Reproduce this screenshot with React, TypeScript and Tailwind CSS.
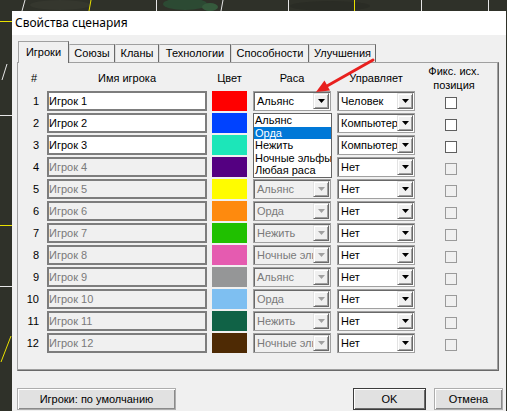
import React from 'react';

type Player = {
  n: number;
  color: string;
  race: string;
  ctrl: string;
  on: boolean;
};

// rows 2-4 sit under the open dropdown, so their race text is hidden
const players: Player[] = [
  { n: 1, color: 'bg-[#ff0000]', race: 'Альянс', ctrl: 'Человек', on: true },
  { n: 2, color: 'bg-[#0042ff]', race: '', ctrl: 'Компьютер', on: true },
  { n: 3, color: 'bg-[#1ce6b9]', race: '', ctrl: 'Компьютер', on: true },
  { n: 4, color: 'bg-[#540081]', race: '', ctrl: 'Нет', on: false },
  { n: 5, color: 'bg-[#fffc00]', race: 'Альянс', ctrl: 'Нет', on: false },
  { n: 6, color: 'bg-[#fe8a0e]', race: 'Орда', ctrl: 'Нет', on: false },
  { n: 7, color: 'bg-[#20c000]', race: 'Нежить', ctrl: 'Нет', on: false },
  { n: 8, color: 'bg-[#e55bb0]', race: 'Ночные эльфы', ctrl: 'Нет', on: false },
  { n: 9, color: 'bg-[#959697]', race: 'Альянс', ctrl: 'Нет', on: false },
  { n: 10, color: 'bg-[#7ebff1]', race: 'Орда', ctrl: 'Нет', on: false },
  { n: 11, color: 'bg-[#106246]', race: 'Нежить', ctrl: 'Нет', on: false },
  { n: 12, color: 'bg-[#4e2a04]', race: 'Ночные эльфы', ctrl: 'Нет', on: false },
];

const tabs = [
  { label: 'Игроки', w: 'w-[51px]' },
  { label: 'Союзы', w: 'w-[46px]' },
  { label: 'Кланы', w: 'w-[44px]' },
  { label: 'Технологии', w: 'w-[72px]' },
  { label: 'Способности', w: 'w-[78px]' },
  { label: 'Улучшения', w: 'w-[67px]' },
];

const raceOptions = ['Альянс', 'Орда', 'Нежить', 'Ночные эльфы', 'Любая раса'];

const Combo: React.FC<{ value: string; disabled?: boolean }> = ({ value, disabled }) => (
  <div
    className={`h-[20px] w-[78px] flex p-[1px] border border-[#a0a0a0] shadow-[inset_1px_1px_0_#696969] ${
      disabled ? 'bg-[#f0f0f0]' : 'bg-white'
    }`}
  >
    <div
      className={`flex-1 min-w-0 overflow-hidden whitespace-nowrap pl-[2px] leading-[16px] ${
        disabled ? 'text-[#7a7a7a]' : 'text-black'
      }`}
    >
      {value}
    </div>
    <div className="w-[16px] h-full flex items-center justify-center bg-[#f0f0f0] border border-t-[#e3e3e3] border-l-[#e3e3e3] border-r-[#696969] border-b-[#696969] shadow-[inset_1px_1px_0_#ffffff,inset_-1px_-1px_0_#a0a0a0]">
      <svg width="7" height="4" viewBox="0 0 7 4">
        <path d="M0 0h7L3.5 4z" fill={disabled ? '#a0a0a0' : '#000000'} />
      </svg>
    </div>
  </div>
);

const Background: React.FC = () => (
  <svg className="absolute inset-0" width="507" height="411" viewBox="0 0 507 411">
    <rect width="507" height="411" fill="#2f3129" />
    <ellipse cx="185" cy="4" rx="22" ry="6" fill="#2c4a33" />
    <ellipse cx="210" cy="7" rx="8" ry="4" fill="#355a3c" />
    <ellipse cx="60" cy="5" rx="30" ry="5" fill="#35372e" />
    <ellipse cx="330" cy="6" rx="40" ry="5" fill="#2a2c25" />
    <g strokeWidth="1" fill="none">
      <path d="M25 0L22 11" stroke="#e6e6e6" />
      <path d="M91 0L89 11" stroke="#e8e000" />
      <path d="M156.5 0V11" stroke="#e6e6e6" />
      <path d="M223 0L221 11" stroke="#e6e6e6" />
      <path d="M288.5 0V11" stroke="#e6e6e6" />
      <path d="M354.5 0V11" stroke="#e8e000" />
      <path d="M421.5 0V11" stroke="#e6e6e6" />
      <path d="M488.5 0V11" stroke="#e6e6e6" />
      <path d="M0 21.5H12" stroke="#e8e000" />
      <path d="M7 64L2 80" stroke="#e6e6e6" />
      <path d="M0 115.5H12" stroke="#e6e6e6" />
      <path d="M0 225.5H12" stroke="#e8e000" />
      <path d="M0 286.5H12" stroke="#e6e6e6" />
      <path d="M11 336L1 362" stroke="#e8e000" />
    </g>
  </svg>
);

const Arrow: React.FC = () => (
  <svg className="absolute inset-0 pointer-events-none" width="507" height="411" viewBox="0 0 507 411">
    <path d="M373 60L327 86" stroke="#e8201e" strokeWidth="3" strokeLinecap="round" />
    <polygon points="316,92 330,90.5 324.5,80.5" fill="#e8201e" />
  </svg>
);

const Button: React.FC<{ label: string; w: string; primary?: boolean }> = ({ label, w, primary }) => (
  <div
    className={`${w} h-[22px] flex items-center justify-center bg-[#e1e1e1] ${
      primary
        ? 'border border-[#3c3c3c] shadow-[inset_1px_1px_0_#ffffff,inset_-1px_-1px_0_#696969]'
        : 'border border-[#adadad] shadow-[inset_1px_1px_0_#ffffff,inset_-1px_-1px_0_#8a8a8a]'
    }`}
  >
    {label}
  </div>
);

export default function App() {
  return (
    <div className="relative w-[507px] h-[411px] overflow-hidden font-['Liberation_Sans',Arial,sans-serif] text-[11px] text-black">
      <Background />
      <div className="relative pt-[11px] pl-[12px]">
        <div className="w-[494px] h-[400px] flex flex-col bg-[#f0f0f0]">
          <div className="h-[24px] shrink-0 bg-white flex items-center pl-[3px] font-['Noto_Sans',sans-serif] text-[12px] text-[#000000]">
            Свойства сценария
          </div>

          <div className="flex-1 flex flex-col pl-[5px] pr-[4px] pt-[6px]">
            {/* tabs */}
            <div className="flex items-end h-[21px] pl-[1px]">
              {tabs.map((t, i) =>
                i === 0 ? (
                  <div
                    key={t.label}
                    className={`${t.w} h-[22px] -mb-px relative z-10 flex items-center justify-center bg-[#f0f0f0] border border-b-0 border-t-[#a0a0a0] border-l-[#a0a0a0] border-r-[#696969]`}
                  >
                    {t.label}
                  </div>
                ) : (
                  <div
                    key={t.label}
                    className={`${t.w} h-[18px] flex items-center justify-center bg-[#f0f0f0] border border-b-0 border-t-[#a0a0a0] border-l-[#dadada] border-r-[#696969]`}
                  >
                    {t.label}
                  </div>
                )
              )}
            </div>

            {/* tab panel */}
            <div className="w-[482px] h-[309px] border border-[#a0a0a0] border-r-[#696969] border-b-[#696969] shadow-[inset_-1px_-1px_0_#a0a0a0]">
              <div className="flex h-[28px]">
                <div className="w-[22px] text-right pr-[3px] pt-[8px] leading-[14px]">#</div>
                <div className="ml-[7px] w-[160px] text-center pt-[8px] leading-[14px]">Имя игрока</div>
                <div className="ml-[5px] w-[35px] text-center pt-[8px] leading-[14px]">Цвет</div>
                <div className="ml-[6px] w-[78px] text-center pt-[8px] leading-[14px]">Раса</div>
                <div className="ml-[6px] w-[78px] text-center pt-[8px] leading-[14px]">Управляет</div>
                <div className="w-[78px] text-center pt-[1px] leading-[14px]">
                  Фикс. исх.
                  <br />
                  позиция
                </div>
              </div>

              <div className="relative flex flex-col gap-[2px]">
                {players.map((p) => (
                  <div key={p.n} className="flex h-[20px] items-center">
                    <div className="w-[22px] text-right pr-[1px]">{p.n}</div>
                    <div
                      className={`ml-[7px] w-[160px] h-[20px] flex items-center border-2 border-[#7d7d7d] overflow-hidden whitespace-nowrap ${
                        p.on ? 'bg-white text-black' : 'bg-[#f0f0f0] text-[#7a7a7a]'
                      }`}
                    >
                      Игрок {p.n}
                    </div>
                    <div className={`ml-[5px] w-[35px] h-[20px] ${p.color}`} />
                    <div className="ml-[6px]">
                      <Combo value={p.race} disabled={!p.on} />
                    </div>
                    <div className="ml-[6px]">
                      <Combo value={p.ctrl} />
                    </div>
                    <div
                      className={`ml-[30px] w-[12px] h-[12px] self-start mt-[6px] border ${
                        p.on ? 'bg-white border-[#5f5f5f]' : 'bg-[#f0f0f0] border-[#9a9a9a]'
                      }`}
                    />
                  </div>
                ))}

                {/* open race dropdown */}
                <div className="absolute left-[235px] top-[22px] w-[79px] h-[65px] bg-white border border-[#646464] z-10">
                  {raceOptions.map((o) => (
                    <div
                      key={o}
                      className={`h-[12.6px] leading-[13px] pl-[1px] whitespace-nowrap overflow-hidden ${
                        o === 'Орда' ? 'bg-[#0078d7] text-white' : 'text-black'
                      }`}
                    >
                      {o}
                    </div>
                  ))}
                </div>
              </div>
            </div>

            {/* buttons */}
            <div className="flex mt-[17px] mr-[-1px]">
              <Button label="Игроки: по умолчанию" w="w-[159px]" />
              <div className="ml-auto">
                <Button label="OK" w="w-[73px]" primary />
              </div>
              <div className="ml-[8px]">
                <Button label="Отмена" w="w-[69px]" />
              </div>
            </div>
          </div>
        </div>
      </div>
      <Arrow />
    </div>
  );
}
